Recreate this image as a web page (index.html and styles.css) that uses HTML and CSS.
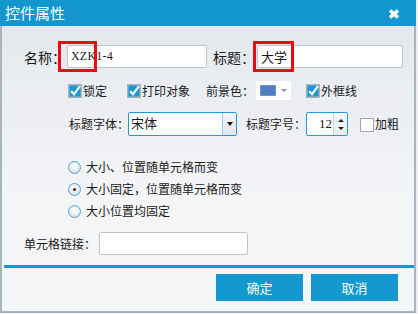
FILE: index.html
```html
<!DOCTYPE html>
<html lang="zh-CN">
<head>
<meta charset="utf-8">
<title>控件属性</title>
<link rel="stylesheet" href="styles.css">
</head>
<body>
<div class="dialog">
  <div class="titlebar">
    <span class="title">控件属性</span>
    <svg class="close" width="12" height="10" viewBox="0 0 12 10"><path d="M2 1.5 L10 8.5 M10 1.5 L2 8.5" stroke="#fff" stroke-width="3.6"/></svg>
  </div>
  <div class="body">
    <div class="row row-name">
      <span class="lbl14 lbl-name">名称：</span>
      <div class="field field-name"><span class="val latin">XZK1-4</span><span class="mark mark-name"></span></div>
      <span class="lbl14 lbl-title">标题：</span>
      <div class="field field-title"><span class="val cjk">大学</span><span class="mark mark-title"></span></div>
    </div>

    <div class="row row-opts">
      <span class="chk"><svg width="14" height="14" viewBox="0 0 14 14"><rect x="0" y="0" width="14" height="14" fill="#aab3bc"/><rect x="1.5" y="1.5" width="11" height="11" fill="#1a98d5"/><path d="M3.2 7.2 L6 10.2 L12 2.2" fill="none" stroke="#fff" stroke-width="2.2"/></svg></span>
      <span class="opt">锁定</span>
      <span class="chk chk-2"><svg width="14" height="14" viewBox="0 0 14 14"><rect x="0" y="0" width="14" height="14" fill="#aab3bc"/><rect x="1.5" y="1.5" width="11" height="11" fill="#1a98d5"/><path d="M3.2 7.2 L6 10.2 L12 2.2" fill="none" stroke="#fff" stroke-width="2.2"/></svg></span>
      <span class="opt">打印对象</span>
      <span class="lbl lbl-fg">前景色：</span>
      <span class="colorpick"><span class="swatch"></span><span class="tri-gray"></span></span>
      <span class="chk chk-3"><svg width="14" height="14" viewBox="0 0 14 14"><rect x="0" y="0" width="14" height="14" fill="#aab3bc"/><rect x="1.5" y="1.5" width="11" height="11" fill="#1a98d5"/><path d="M3.2 7.2 L6 10.2 L12 2.2" fill="none" stroke="#fff" stroke-width="2.2"/></svg></span>
      <span class="opt">外框线</span>
    </div>

    <div class="row row-font">
      <span class="lbl lbl-font">标题字体：</span>
      <div class="select"><span class="sel-val">宋体</span><span class="sel-btn"><span class="tri-down"></span></span></div>
      <span class="lbl lbl-size">标题字号：</span>
      <div class="spin"><span class="spin-val">12</span><span class="spin-btns"><span class="tri-up-s"></span><span class="tri-down-s"></span></span></div>
      <span class="chk-off"></span>
      <span class="opt">加粗</span>
    </div>

    <div class="radios">
      <div class="radio-row"><span class="radio"></span><span class="opt">大小、位置随单元格而变</span></div>
      <div class="radio-row"><span class="radio checked"></span><span class="opt">大小固定，位置随单元格而变</span></div>
      <div class="radio-row"><span class="radio"></span><span class="opt">大小位置均固定</span></div>
    </div>

    <div class="row row-link">
      <span class="lbl lbl-link">单元格链接：</span>
      <div class="field field-link"></div>
    </div>

    <div class="separator"></div>

    <div class="buttons">
      <span class="btn">确定</span>
      <span class="btn">取消</span>
    </div>
  </div>
</div>
</body>
</html>
```

FILE: styles.css
```css
html, body {
  margin: 0;
  padding: 0;
}
body {
  background: #eceef1;
  font-family: "Noto Sans CJK SC", "Noto Sans", sans-serif;
  color: #1a1a1a;
  font-size: 12px;
}
.dialog {
  width: 416px;
  height: 313px;
  box-sizing: border-box;
  display: flex;
  flex-direction: column;
}
.titlebar {
  height: 26px;
  flex: none;
  background: #1497cf;
  display: flex;
  align-items: center;
  justify-content: space-between;
  padding: 0 16px 0 5px;
}
.title {
  color: #fff;
  font-size: 15px;
  line-height: 26px;
}
.close {
  display: block;
  margin-top: 1px;
}
.body {
  flex: 1;
  border: 2px solid #a7b4c1;
  border-top: none;
  background: linear-gradient(#e4e8ed, #f4f5f7 60%);
  display: flex;
  flex-direction: column;
}
.row {
  display: flex;
  align-items: center;
}
.lbl14 {
  font-size: 14px;
  line-height: 20px;
}
.lbl, .opt {
  font-size: 12px;
  line-height: 16px;
  white-space: nowrap;
}
.row-name {
  margin-top: 19px;
  padding-left: 22px;
  height: 23px;
}
.lbl-name { width: 43px; }
.lbl-title { width: 44px; margin-left: 6px; }
.field {
  position: relative;
  height: 23px;
  box-sizing: border-box;
  background: #fff;
  border: 1px solid #bcc5cf;
  border-radius: 2px;
  display: flex;
  align-items: center;
}
.field-name { width: 140px; }
.field-title { width: 146px; }
.val { padding-left: 3px; }
.latin {
  font-family: "Liberation Serif", serif;
  font-size: 12px;
  letter-spacing: 0.2px;
}
.cjk { font-size: 13px; }
.mark {
  position: absolute;
  border: 3px solid #ec0a12;
  top: -5px;
  height: 31px;
  box-sizing: border-box;
}
.mark-name { left: -10px; width: 39px; }
.mark-title { left: -5px; width: 41px; }

.row-opts {
  margin-top: 13px;
  height: 19px;
  padding-left: 66px;
}
.chk {
  width: 14px;
  height: 14px;
  margin-right: 1px;
  flex: none;
}
.chk svg { display: block; }
.chk-2 { margin-left: 20px; }
.chk-3 { margin-left: 15px; }
.lbl-fg { margin-left: 16px; width: 50px; }
.colorpick {
  width: 35px;
  height: 19px;
  background: #fff;
  display: flex;
  align-items: center;
}
.swatch {
  width: 16px;
  height: 11px;
  margin-left: 4px;
  background: #4f7fbe;
  box-sizing: border-box;
  border: 1px solid #6f94c8;
}
.tri-gray {
  margin-left: 5px;
  width: 0;
  height: 0;
  border-left: 3px solid transparent;
  border-right: 3px solid transparent;
  border-top: 3px solid #8c939a;
}

.row-font {
  margin-top: 12px;
  height: 24px;
  padding-left: 67px;
}
.lbl-font { width: 59px; }
.select {
  width: 109px;
  height: 24px;
  box-sizing: border-box;
  border: 1px solid #1e9ad6;
  border-radius: 2px;
  background: #fff;
  display: flex;
}
.sel-val {
  flex: 1;
  font-size: 13px;
  line-height: 20px;
  padding-left: 2px;
}
.sel-btn {
  width: 13px;
  border-left: 1px solid #9ccbe6;
  background: linear-gradient(#f4f5f7, #e2e6ea);
  display: flex;
  align-items: center;
  justify-content: center;
}
.tri-down {
  width: 0;
  height: 0;
  border-left: 3.5px solid transparent;
  border-right: 3.5px solid transparent;
  border-top: 4px solid #111;
}
.lbl-size { margin-left: 9px; width: 60px; }
.spin {
  width: 42px;
  height: 24px;
  box-sizing: border-box;
  border: 1px solid #1e9ad6;
  border-radius: 2px;
  background: #fff;
  display: flex;
}
.spin-val {
  width: 25px;
  text-align: right;
  padding-right: 1px;
  font-family: "Liberation Serif", serif;
  font-size: 13px;
  line-height: 22px;
}
.spin-btns {
  flex: 1;
  border-left: 1px solid #c8d2dc;
  background: linear-gradient(#f7f8f9, #e9ecef);
  display: flex;
  flex-direction: column;
  align-items: center;
  justify-content: space-around;
  padding: 3px 0;
}
.tri-up-s {
  width: 0;
  height: 0;
  border-left: 3px solid transparent;
  border-right: 3px solid transparent;
  border-bottom: 3px solid #222;
}
.tri-down-s {
  width: 0;
  height: 0;
  border-left: 3px solid transparent;
  border-right: 3px solid transparent;
  border-top: 3px solid #222;
}
.chk-off {
  width: 14px;
  height: 14px;
  box-sizing: border-box;
  margin-left: 12px;
  margin-right: 1px;
  margin-top: 2px;
  border: 1px solid #9ea8b2;
  background: #fff;
}

.radios {
  margin-top: 20px;
  padding-left: 66px;
  display: flex;
  flex-direction: column;
}
.radio-row {
  height: 22px;
  display: flex;
  align-items: center;
}
.radio {
  width: 13px;
  height: 13px;
  box-sizing: border-box;
  border-radius: 50%;
  border: 1px solid #4ba7da;
  background: radial-gradient(circle at 50% 40%, #ffffff 0%, #eef0f2 45%, #c9cdd2 100%);
  margin-right: 5px;
  position: relative;
}
.radio.checked::after {
  content: "";
  position: absolute;
  left: 4px;
  top: 4px;
  width: 3px;
  height: 3px;
  border-radius: 50%;
  background: #222;
}

.row-link {
  margin-top: 10px;
  padding-left: 22px;
  height: 23px;
}
.lbl-link { width: 75px; }
.field-link { width: 149px; }

.separator {
  margin: 10px 0 0 2px;
  height: 3px;
  background: #1597cf;
}
.buttons {
  margin-top: 6px;
  display: flex;
  justify-content: flex-end;
  gap: 8px;
  padding-right: 16px;
}
.btn {
  width: 87px;
  height: 27px;
  background: #1597cf;
  color: #fff;
  font-size: 13px;
  line-height: 27px;
  text-align: center;
}
```
